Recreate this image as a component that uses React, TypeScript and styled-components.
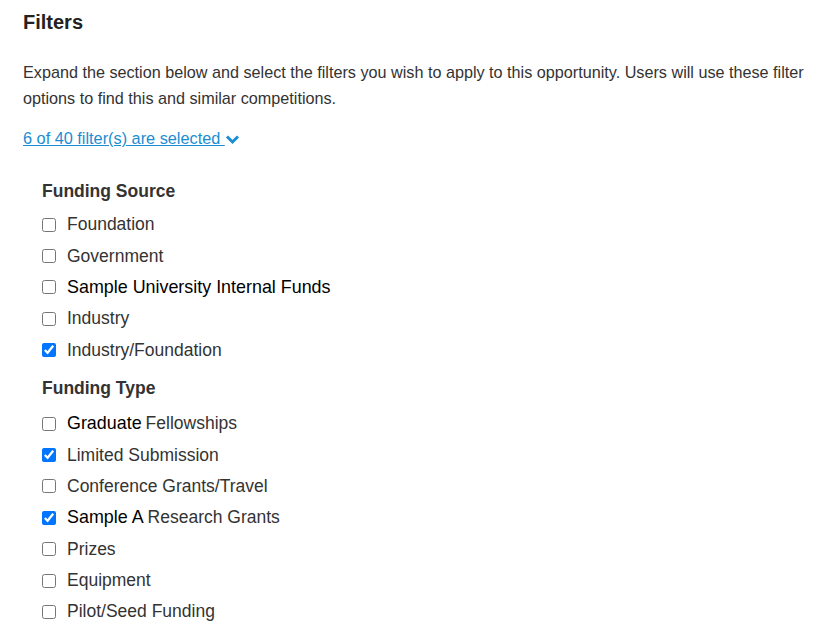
import React from "react";
import styled, { createGlobalStyle } from "styled-components";

const GlobalStyle = createGlobalStyle`
    body {
        margin: 0;
        background: #fff;
        font-family: "Liberation Sans", Arial, sans-serif;
        color: #333;
    }
`;

const Page = styled.div`
    padding: 10px 23px 0 23px;
`;

const Title = styled.h2`
    margin: 0;
    font-size: 20px;
    font-weight: bold;
    color: #222;
    line-height: 24px;
`;

const Intro = styled.p`
    margin: 25px 0 0 0;
    font-size: 16.2px;
    line-height: 26px;
`;

const LinkRow = styled.div`
    margin-top: 16px;
    line-height: 22px;
`;

const ToggleLink = styled.a`
    font-size: 16.3px;
    color: #1a8dd2;
    text-decoration: underline;
    cursor: pointer;

    svg {
        vertical-align: -1px;
    }
`;

const Groups = styled.div`
    padding: 29px 0 0 19px;
`;

const GroupTitle = styled.h3<{ $gap: number }>`
    margin: 0 0 ${(p) => p.$gap}px 0;
    font-size: 17.5px;
    font-weight: bold;
    color: #333;
    line-height: 24px;
`;

const Group = styled.div`
    margin-bottom: 10px;
`;

const Option = styled.label`
    display: flex;
    align-items: center;
    height: 31.4px;
    font-size: 17.5px;
    color: #333;

    input {
        width: 14px;
        height: 14px;
        margin: 0 11px 0 0;
    }
`;

const Strong = styled.span`
    color: #000;
    font-size: 17.9px;
    margin-right: 4px;
`;

type Item = { label: string; prefix?: string; checked?: boolean };

const fundingSource: Item[] = [
    { label: "Foundation" },
    { label: "Government" },
    { label: "", prefix: "Sample University Internal Funds" },
    { label: "Industry" },
    { label: "Industry/Foundation", checked: true },
];

const fundingType: Item[] = [
    { label: "Fellowships", prefix: "Graduate" },
    { label: "Limited Submission", checked: true },
    { label: "Conference Grants/Travel" },
    { label: "Research Grants", prefix: "Sample A", checked: true },
    { label: "Prizes" },
    { label: "Equipment" },
    { label: "Pilot/Seed Funding" },
];

const Chevron = () => (
    <svg width="15" height="11" viewBox="0 0 15 11">
        <path d="M2 2.5 L7.5 8 L13 2.5" fill="none" stroke="#1a8dd2" strokeWidth="3" />
    </svg>
);

const FilterGroup: React.FunctionComponent<{ title: string; items: Item[]; gap: number }> = ({ title, items, gap }) => (
    <Group>
        <GroupTitle $gap={gap}>{title}</GroupTitle>
        {items.map((item, i) => (
            <Option key={i}>
                <input type="checkbox" defaultChecked={!!item.checked} />
                {item.prefix && <Strong>{item.prefix}</Strong>}
                {item.label}
            </Option>
        ))}
    </Group>
);

const App = () => (
    <Page>
        <GlobalStyle />
        <Title>Filters</Title>
        <Intro>
            Expand the section below and select the filters you wish to apply to this opportunity. Users will use these filter
            options to find this and similar competitions.
        </Intro>
        <LinkRow>
            <ToggleLink>
                6 of 40 filter(s) are selected <Chevron />
            </ToggleLink>
        </LinkRow>
        <Groups>
            <FilterGroup title="Funding Source" items={fundingSource} gap={6} />
            <FilterGroup title="Funding Type" items={fundingType} gap={8} />
        </Groups>
    </Page>
);

export default App;
